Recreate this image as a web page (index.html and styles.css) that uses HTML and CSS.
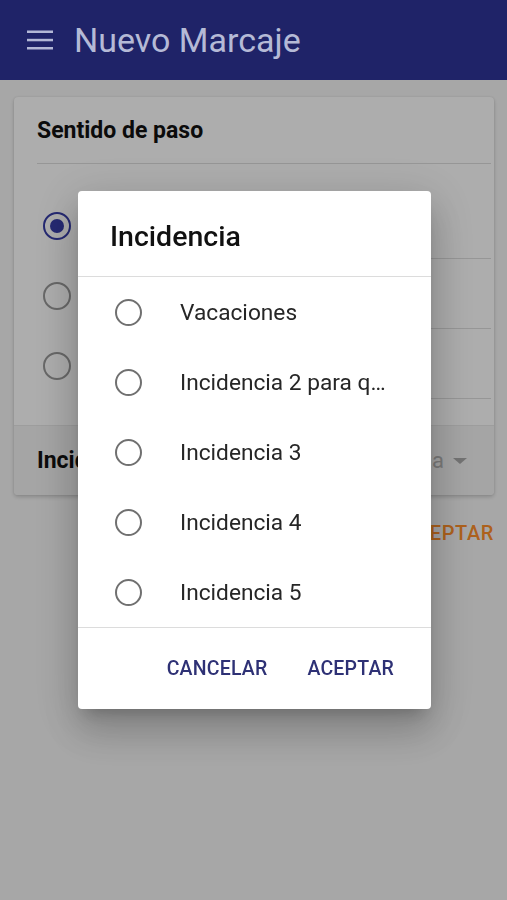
FILE: index.html
```html
<!DOCTYPE html>
<html>
<head>
  <title>Nuevo Marcaje</title>
  <link rel="stylesheet" href="styles.css">
</head>
<body>
<header class="toolbar">
  <svg class="menu-icon" width="26" height="20" viewBox="0 0 26 20">
    <rect x="0" y="0.5" width="26" height="2.5"></rect>
    <rect x="0" y="8.8" width="26" height="2.5"></rect>
    <rect x="0" y="17" width="26" height="2.5"></rect>
  </svg>
  <h1 class="toolbar-title">Nuevo Marcaje</h1>
</header>

<main class="content">
  <section class="card">
    <div class="card-header">Sentido de paso</div>
    <ul class="radio-list">
      <li class="radio-row">
        <span class="radio radio-checked"></span>
        <span class="radio-body">Entrada</span>
      </li>
      <li class="radio-row">
        <span class="radio"></span>
        <span class="radio-body">Salida</span>
      </li>
      <li class="radio-row">
        <span class="radio"></span>
        <span class="radio-body">Indiferente</span>
      </li>
    </ul>
    <div class="select-row">
      <span class="select-label">Incidencia</span>
      <span class="select-value">Ninguna</span>
      <span class="select-caret"></span>
    </div>
  </section>

  <div class="card-actions">
    <button class="btn-accent">ACEPTAR</button>
  </div>
</main>

<div class="backdrop"></div>

<div class="alert-wrapper">
  <div class="alert">
    <div class="alert-title">Incidencia</div>
    <div class="alert-list">
      <div class="alert-option"><span class="alert-radio"></span><span class="alert-label">Vacaciones</span></div>
      <div class="alert-option"><span class="alert-radio"></span><span class="alert-label">Incidencia 2 para que el texto sea largo</span></div>
      <div class="alert-option"><span class="alert-radio"></span><span class="alert-label">Incidencia 3</span></div>
      <div class="alert-option"><span class="alert-radio"></span><span class="alert-label">Incidencia 4</span></div>
      <div class="alert-option"><span class="alert-radio"></span><span class="alert-label">Incidencia 5</span></div>
    </div>
    <div class="alert-buttons">
      <button class="alert-btn">CANCELAR</button>
      <button class="alert-btn">ACEPTAR</button>
    </div>
  </div>
</div>
</body>
</html>
```

FILE: styles.css
```css
/* page */
body {
  margin: 0;
  font-family: Roboto, "Noto Sans", sans-serif;
  background-color: #f7f7f7;
  min-height: 900px;
}

/* toolbar */
.toolbar {
  height: 80px;
  background-color: #1f2368;
  display: flex;
  align-items: center;
  padding-left: 27px;
  gap: 21px;
}

.menu-icon {
  fill: #b3b8d6;
}

.toolbar-title {
  margin: 0;
  font-size: 34px;
  font-weight: 400;
  color: #b5bad6;
}

/* content */
.content {
  padding: 17px 13px 0 14px;
}

.card {
  background-color: #fff;
  border-radius: 4px;
  box-shadow: 0 2px 4px rgba(0, 0, 0, 0.18), 0 0 2px rgba(0, 0, 0, 0.1);
}

.card-header {
  height: 67px;
  box-sizing: border-box;
  margin: 0 3px 0 23px;
  border-bottom: 1px solid #dedede;
  display: flex;
  align-items: center;
  font-size: 23px;
  font-weight: 700;
  color: #111;
}

.radio-list {
  list-style: none;
  margin: 0;
  padding: 25px 0 0 0;
}

.radio-row {
  height: 70px;
  display: flex;
  align-items: center;
  padding-left: 29px;
}

.radio {
  width: 28px;
  height: 28px;
  box-sizing: border-box;
  border: 2px solid #9a9a9a;
  border-radius: 50%;
  margin-right: 25px;
  margin-top: 3px;
  flex-shrink: 0;
}

.radio-checked {
  border-color: #373da8;
  display: flex;
  align-items: center;
  justify-content: center;
}

.radio-checked::after {
  content: "";
  width: 14px;
  height: 14px;
  border-radius: 50%;
  background-color: #373da8;
}

.radio-body {
  flex: 1;
  height: 100%;
  box-sizing: border-box;
  margin-right: 3px;
  border-bottom: 1px solid #dedede;
  display: flex;
  align-items: center;
  font-size: 22px;
  color: #222;
}

.select-row {
  margin-top: 26px;
  height: 70px;
  box-sizing: border-box;
  background-color: #f3f3f3;
  border-top: 1px solid #e8e8e8;
  border-radius: 0 0 4px 4px;
  display: flex;
  align-items: center;
  padding: 0 27px 0 23px;
}

.select-label {
  font-size: 23px;
  font-weight: 700;
  color: #111;
}

.select-value {
  margin-left: auto;
  font-size: 22px;
  color: #b4b4b4;
}

.select-caret {
  margin-left: 9px;
  width: 0;
  height: 0;
  border-top: 6px solid #aaa;
  border-left: 7px solid transparent;
  border-right: 7px solid transparent;
}

.card-actions {
  display: flex;
  justify-content: flex-end;
  margin-top: 26px;
}

.btn-accent {
  background: none;
  border: none;
  padding: 0;
  line-height: 24px;
  font-family: inherit;
  font-size: 20px;
  font-weight: 500;
  letter-spacing: 0.6px;
  color: #ff8f2b;
}

/* dialog */
.backdrop {
  position: fixed;
  top: 80px;
  left: 0;
  right: 0;
  bottom: 0;
  background-color: rgba(0, 0, 0, 0.32);
}

.alert-wrapper {
  position: fixed;
  top: 0;
  left: 0;
  right: 0;
  bottom: 0;
  display: flex;
  align-items: center;
  justify-content: center;
  padding-left: 2px;
}

.alert {
  width: 353px;
  background-color: #fff;
  border-radius: 4px;
  box-shadow: 0 11px 15px -7px rgba(0, 0, 0, 0.2), 0 24px 38px 3px rgba(0, 0, 0, 0.14), 0 9px 46px 8px rgba(0, 0, 0, 0.12);
}

.alert-title {
  height: 86px;
  box-sizing: border-box;
  padding: 5px 0 0 32px;
  border-bottom: 1px solid #dcdcdc;
  display: flex;
  align-items: center;
  font-size: 28.5px;
  font-weight: 500;
  color: #111;
}

.alert-option {
  height: 70px;
  display: flex;
  align-items: center;
  padding-left: 37px;
}

.alert-radio {
  width: 27px;
  height: 27px;
  box-sizing: border-box;
  border: 2px solid #707070;
  border-radius: 50%;
  flex-shrink: 0;
}

.alert-label {
  margin-left: 38px;
  width: 206px;
  white-space: nowrap;
  overflow: hidden;
  text-overflow: ellipsis;
  font-size: 22.7px;
  color: #262626;
}

.alert-buttons {
  height: 82px;
  box-sizing: border-box;
  border-top: 1px solid #dcdcdc;
  display: flex;
  justify-content: flex-end;
  align-items: center;
  gap: 40px;
  padding-right: 37px;
}

.alert-btn {
  background: none;
  border: none;
  padding: 0;
  font-family: inherit;
  font-size: 19.5px;
  font-weight: 500;
  letter-spacing: 0.2px;
  color: #2e3175;
}
```
